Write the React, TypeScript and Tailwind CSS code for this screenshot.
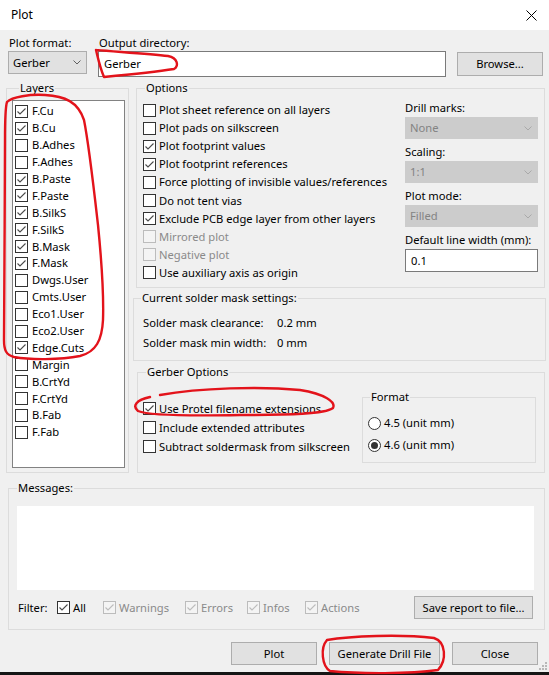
import React from 'react';

type Layer = { name: string; on: boolean };

const layers: Layer[] = [
  { name: 'F.Cu', on: true },
  { name: 'B.Cu', on: true },
  { name: 'B.Adhes', on: false },
  { name: 'F.Adhes', on: false },
  { name: 'B.Paste', on: true },
  { name: 'F.Paste', on: true },
  { name: 'B.SilkS', on: true },
  { name: 'F.SilkS', on: true },
  { name: 'B.Mask', on: true },
  { name: 'F.Mask', on: true },
  { name: 'Dwgs.User', on: false },
  { name: 'Cmts.User', on: false },
  { name: 'Eco1.User', on: false },
  { name: 'Eco2.User', on: false },
  { name: 'Edge.Cuts', on: true },
  { name: 'Margin', on: false },
  { name: 'B.CrtYd', on: false },
  { name: 'F.CrtYd', on: false },
  { name: 'B.Fab', on: false },
  { name: 'F.Fab', on: false },
];

const options: { label: string; on?: boolean; disabled?: boolean }[] = [
  { label: 'Plot sheet reference on all layers' },
  { label: 'Plot pads on silkscreen' },
  { label: 'Plot footprint values', on: true },
  { label: 'Plot footprint references', on: true },
  { label: 'Force plotting of invisible values/references' },
  { label: 'Do not tent vias' },
  { label: 'Exclude PCB edge layer from other layers', on: true },
  { label: 'Mirrored plot', disabled: true },
  { label: 'Negative plot', disabled: true },
  { label: 'Use auxiliary axis as origin' },
];

function Box({ checked = false, disabled = false }: { checked?: boolean; disabled?: boolean }) {
  return (
    <span
      className={`flex h-[13px] w-[13px] shrink-0 items-center justify-center border ${
        disabled ? 'border-[#bcbcbc] bg-[#f4f4f4]' : 'border-[#333333] bg-white'
      }`}
    >
      {checked ? (
        <svg width="11" height="11" viewBox="0 0 11 11">
          <path
            d="M1.5 5.5 L4 8 L9.5 2.5"
            fill="none"
            stroke={disabled ? '#bcbcbc' : '#4a4a4a'}
            strokeWidth="1.1"
          />
        </svg>
      ) : null}
    </span>
  );
}

function Radio({ on = false }: { on?: boolean }) {
  return (
    <span className="flex h-[13px] w-[13px] shrink-0 items-center justify-center rounded-full border border-[#333333] bg-white">
      {on ? <span className="h-[7px] w-[7px] rounded-full bg-[#333333]" /> : null}
    </span>
  );
}

function Chevron({ color }: { color: string }) {
  return (
    <svg width="8" height="5" viewBox="0 0 8 5">
      <path d="M0.5 0.5 L4 4 L7.5 0.5" fill="none" stroke={color} strokeWidth="1" />
    </svg>
  );
}

function Combo({ value, disabled = false, className = '' }: { value: string; disabled?: boolean; className?: string }) {
  return (
    <div
      className={`flex items-center justify-between border pl-[4px] pr-[5px] ${
        disabled ? 'border-[#cccccc] bg-[#cccccc] text-[#838383]' : 'border-[#adadad] bg-[#e1e1e1]'
      } ${className}`}
    >
      <span>{value}</span>
      <Chevron color={disabled ? '#a9a9a9' : '#606060'} />
    </div>
  );
}

function Btn({ children, className = '' }: { children: React.ReactNode; className?: string }) {
  return (
    <button
      type="button"
      className={`flex shrink-0 items-center justify-center border border-[#adadad] bg-[#e1e1e1] ${className}`}
    >
      {children}
    </button>
  );
}

function Group({
  title,
  className = '',
  legend = 'ml-[7px]',
  children,
}: {
  title: string;
  className?: string;
  legend?: string;
  children?: React.ReactNode;
}) {
  return (
    <fieldset className={`shrink-0 border border-[#dcdcdc] ${className}`}>
      <legend className={`px-[1px] leading-4 ${legend}`}>{title}</legend>
      {children}
    </fieldset>
  );
}

function FilterItem({ label, w, checked = true, disabled = true }: { label: string; w: string; checked?: boolean; disabled?: boolean }) {
  return (
    <div className={`flex shrink-0 items-center gap-[3px] ${w}`}>
      <Box checked={checked} disabled={disabled} />
      <span className={disabled ? 'text-[#8a8a8a]' : ''}>{label}</span>
    </div>
  );
}

function Scribbles() {
  return (
    <svg
      className="pointer-events-none absolute left-0 top-0"
      width="549"
      height="675"
      viewBox="0 0 549 675"
      fill="none"
      stroke="#e3131b"
      strokeWidth="2.4"
      strokeLinecap="round"
      strokeLinejoin="round"
    >
      {/* output directory */}
      <path d="M96 50 C120 52 150 54 168 56 C178 58 179 66 174 69 C155 72 125 75 104 77 C100 68 98 58 96 50" />
      {/* layers */}
      <path d="M7 102 C12 97 30 94 45 95 C65 96 78 102 84 120 C89 145 94 190 98 225 C101 255 104 290 103 320 C102 340 96 352 80 356 C60 360 30 360 14 357 C6 355 4 350 4 340 C4 300 5 200 5 140 C5 120 5 108 7 102" />
      {/* protel */}
      <path d="M160 395 C200 388 260 386 300 390 C325 394 336 402 333 408 C325 414 290 415 240 415 C190 416 150 416 138 411 C132 406 136 400 150 397" />
      {/* drill */}
      <path d="M327 640 C350 636 400 634 434 638 C446 642 447 660 438 670 C410 674 360 674 330 671 C322 666 320 648 327 640" />
    </svg>
  );
}

export default function App() {
  return (
    <div className="relative h-[675px] w-[549px] overflow-hidden bg-white font-['Noto_Sans','Open_Sans',sans-serif] text-[11.2px] leading-4 text-black">
      {/* title bar */}
      <div className="flex h-[30px] items-center justify-between pl-[11px] pr-[12px]">
        <span className="text-[12px]">Plot</span>
        <svg width="11" height="11" viewBox="0 0 11 11">
          <path d="M0.5 0.5 L10.5 10.5 M10.5 0.5 L0.5 10.5" stroke="#000" strokeWidth="1" />
        </svg>
      </div>

      <div className="relative h-[642px] bg-[#f0f0f0] pt-[5px]">
        {/* format + directory */}
        <div className="flex items-start">
          <div className="ml-[8px] w-[79px]">
            <div className="pl-[1px]">Plot format:</div>
            <Combo value="Gerber" className="h-[23px]" />
          </div>
          <div className="ml-[11px] w-[348px]">
            <div className="pl-[1px]">Output directory:</div>
            <div className="flex h-[26px] items-center border border-[#7a7a7a] bg-white pl-[5px]">Gerber</div>
          </div>
          <Btn className="ml-[11px] mt-[17px] h-[24px] w-[86px]">Browse...</Btn>
        </div>

        <div className="mt-[3px] flex items-start">
          {/* layers */}
          <Group title="Layers" className="ml-[6px] h-[393px] w-[123px] pl-[5px]">
            <div className="mt-[4px] h-[368px] w-[113px] border border-[#828282] bg-white pt-[2px]">
              {layers.map((l) => (
                <div key={l.name} className="flex h-[16.9px] items-center gap-[4px] pl-[2px]">
                  <Box checked={l.on} />
                  <span>{l.name}</span>
                </div>
              ))}
            </div>
          </Group>

          <div className="ml-[7px] w-[409px]">
            {/* options */}
            <Group title="Options" legend="ml-[8px]" className="h-[208px] w-[409px]">
              <div className="flex justify-between">
                <div className="mt-[5px] pl-[6px]">
                  {options.map((o) => (
                    <div key={o.label} className="flex h-[18.1px] items-center gap-[3px]">
                      <Box checked={o.on} disabled={o.disabled} />
                      <span className={o.disabled ? 'text-[#8a8a8a]' : ''}>{o.label}</span>
                    </div>
                  ))}
                </div>
                <div className="mr-[6px] mt-[4px] w-[133px]">
                  <div>Drill marks:</div>
                  <Combo value="None" disabled className="mt-[1px] h-[22px]" />
                  <div className="mt-[5px]">Scaling:</div>
                  <Combo value="1:1" disabled className="mt-[1px] h-[22px]" />
                  <div className="mt-[5px]">Plot mode:</div>
                  <Combo value="Filled" disabled className="mt-[1px] h-[22px]" />
                  <div className="mt-[5px]">Default line width (mm):</div>
                  <div className="mt-[1px] flex h-[23px] items-center border border-[#7a7a7a] bg-white pl-[5px]">0.1</div>
                </div>
              </div>
            </Group>

            {/* solder mask */}
            <Group
              title="Current solder mask settings:"
              legend="ml-[7px]"
              className="-ml-[3px] mt-[2px] h-[71px] w-[413px]"
            >
              <div className="mt-[9px] flex flex-col gap-[4px] pl-[9px]">
                <div className="flex">
                  <span className="w-[134px]">Solder mask clearance:</span>
                  <span>0.2 mm</span>
                </div>
                <div className="flex">
                  <span className="w-[134px]">Solder mask min width:</span>
                  <span>0 mm</span>
                </div>
              </div>
            </Group>

            {/* gerber options */}
            <Group title="Gerber Options" legend="ml-[8px]" className="ml-[1px] mt-[3px] h-[109px] w-[408px]">
              <div className="flex items-start">
                <div className="mt-[19px] pl-[5px]">
                  <div className="flex h-[19px] items-center gap-[3px]">
                    <Box checked />
                    <span>Use Protel filename extensions</span>
                  </div>
                  <div className="flex h-[19px] items-center gap-[3px]">
                    <Box />
                    <span>Include extended attributes</span>
                  </div>
                  <div className="flex h-[19px] items-center gap-[3px]">
                    <Box />
                    <span>Subtract soldermask from silkscreen</span>
                  </div>
                </div>
                <Group title="Format" className="ml-auto mr-[8px] mt-[9px] h-[74px] w-[174px]">
                  <div className="mt-[7px] pl-[5px]">
                    <div className="flex h-[22px] items-center gap-[3px]">
                      <Radio />
                      <span>4.5 (unit mm)</span>
                    </div>
                    <div className="flex h-[22px] items-center gap-[3px]">
                      <Radio on />
                      <span>4.6 (unit mm)</span>
                    </div>
                  </div>
                </Group>
              </div>
            </Group>
          </div>
        </div>

        {/* messages */}
        <Group title="Messages:" legend="ml-[8px]" className="ml-[8px] mt-[7px] h-[150px] w-[537px]">
          <div className="ml-[8px] mt-[10px] h-[84px] w-[517px] bg-white" />
          <div className="mt-[6px] flex h-[23px] items-center pl-[9px]">
            <span className="w-[39px] shrink-0">Filter:</span>
            <FilterItem label="All" w="w-[46px]" disabled={false} />
            <FilterItem label="Warnings" w="w-[82px]" />
            <FilterItem label="Errors" w="w-[62px]" />
            <FilterItem label="Infos" w="w-[58px]" />
            <FilterItem label="Actions" w="w-[80px]" />
            <Btn className="ml-auto mr-[11px] h-[23px] w-[119px]">Save report to file...</Btn>
          </div>
        </Group>

        {/* bottom buttons */}
        <div className="mt-[12px] flex justify-end gap-[12px] pr-[11px]">
          <Btn className="h-[23px] w-[86px]">Plot</Btn>
          <Btn className="h-[23px] w-[111px]">Generate Drill File</Btn>
          <Btn className="h-[23px] w-[86px]">Close</Btn>
        </div>

        {/* size grip */}
        <svg className="absolute bottom-[2px] right-[2px]" width="8" height="8" viewBox="0 0 8 8" fill="#b8b8b8">
          <rect x="6" y="0" width="2" height="2" />
          <rect x="3" y="3" width="2" height="2" />
          <rect x="6" y="3" width="2" height="2" />
          <rect x="0" y="6" width="2" height="2" />
          <rect x="3" y="6" width="2" height="2" />
          <rect x="6" y="6" width="2" height="2" />
        </svg>
      </div>
      <div className="h-[3px] bg-[#151515]" />

      <Scribbles />
    </div>
  );
}
